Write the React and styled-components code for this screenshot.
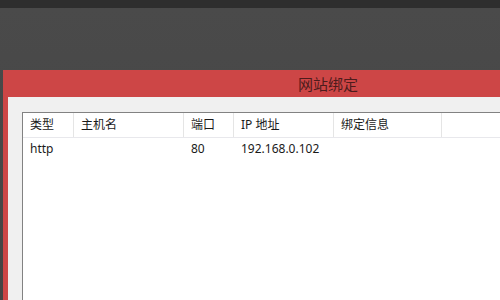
import React from "react";
import styled, {createGlobalStyle} from "styled-components";

const GlobalStyle = createGlobalStyle`
html, body {
margin: 0;
padding: 0;
background: #464646;
overflow: hidden;
}
body {
font-family: "Noto Sans", "Noto Sans CJK SC", sans-serif;
}
`;

const TopStrip = styled.div`
height: 8px;
background: #2e2e2e;
`;

const Backdrop = styled.div`
height: 292px;
padding: 62px 0 0 3px;
box-sizing: border-box;
overflow: hidden;
background: linear-gradient(#4a4a4a, #444444);
`;

const Dialog = styled.div`
width: 650px;
height: 100%;
display: flex;
flex-direction: column;
background: #cd4646;
padding: 0 5px;
box-sizing: border-box;
`;

const TitleBar = styled.div`
height: 27px;
flex: none;
display: flex;
align-items: center;
justify-content: center;
font-family: "Noto Sans CJK SC", sans-serif;
font-size: 15px;
color: #4d1c1c;
`;

const Body = styled.div`
flex: 1;
background: #f0f0f0;
padding: 15px 0 0 14px;
`;

const ListBox = styled.div`
height: 100%;
background: #ffffff;
border: 1px solid #828282;
border-bottom: none;
box-sizing: border-box;
font-family: "Noto Sans", "Noto Sans CJK SC", sans-serif;
font-size: 12px;
color: #1a1a1a;
`;

const Row = styled.div`
display: flex;
height: ${({header}) => (header ? "24px" : "22px")};
align-items: center;
border-bottom: ${({header}) => (header ? "1px solid #e8e8ec" : "none")};
`;

const Cell = styled.div`
width: ${({w}) => w}px;
flex: none;
height: 100%;
display: flex;
align-items: center;
padding: 0 0 2px 7px;
box-sizing: border-box;
white-space: nowrap;
border-right: ${({header}) => (header ? "1px solid #e5e5e5" : "1px solid transparent")};
`;

const columns = [
    {label: "类型", w: 51},
    {label: "主机名", w: 110},
    {label: "端口", w: 50},
    {label: "IP 地址", w: 100},
    {label: "绑定信息", w: 108},
];

const bindings = [
    {type: "http", host: "", port: "80", ip: "192.168.0.102", info: ""},
];

export default function App(){
    return(
        <>
            <GlobalStyle/>
            <TopStrip/>
            <Backdrop>
                <Dialog>
                    <TitleBar>网站绑定</TitleBar>
                    <Body>
                        <ListBox>
                            <Row header>
                                {columns.map(c => (
                                    <Cell header w={c.w} key={c.label}>{c.label}</Cell>
                                ))}
                            </Row>
                            {bindings.map((b, i) => (
                                <Row key={i}>
                                    <Cell w={51}>{b.type}</Cell>
                                    <Cell w={110}>{b.host}</Cell>
                                    <Cell w={50}>{b.port}</Cell>
                                    <Cell w={100}>{b.ip}</Cell>
                                    <Cell w={108}>{b.info}</Cell>
                                </Row>
                            ))}
                        </ListBox>
                    </Body>
                </Dialog>
            </Backdrop>
        </>
    )
}
